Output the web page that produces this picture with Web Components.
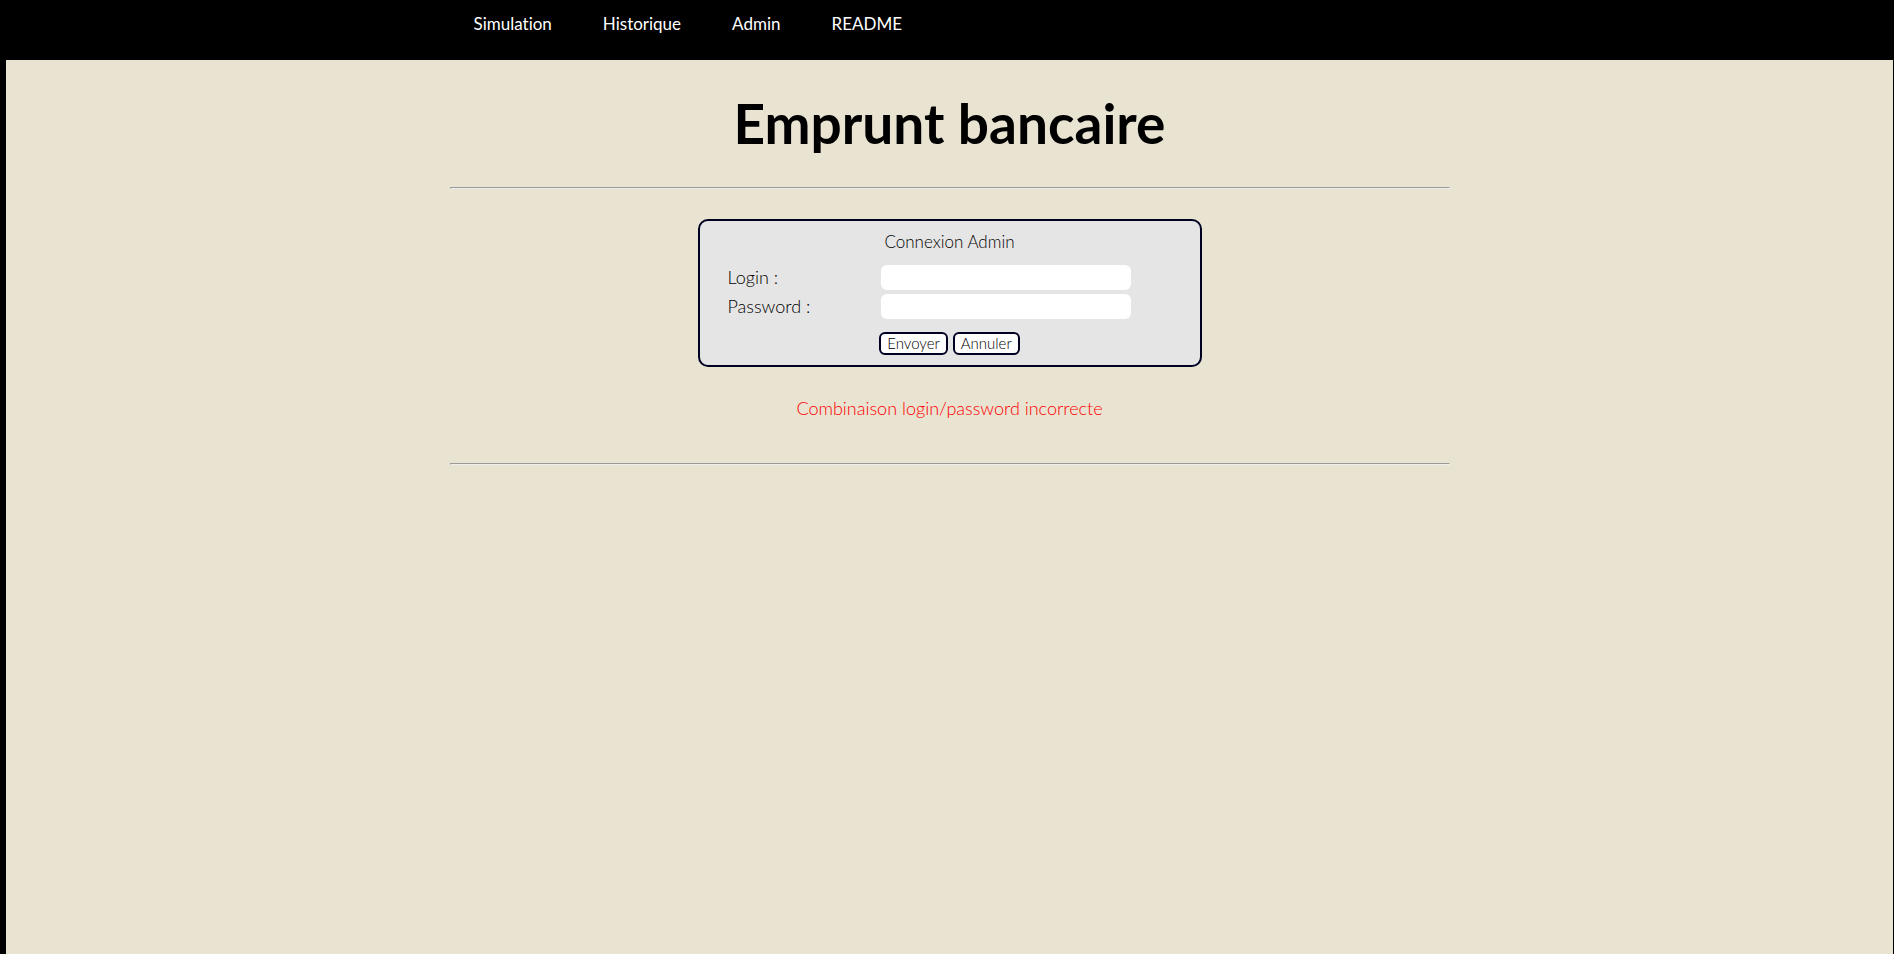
<!DOCTYPE html>
<html lang="fr">
<head>
<meta charset="utf-8">
<title>Emprunt bancaire</title>
<style>
html { background: #000; }
body { margin: 0; min-height: 100vh; background: #000; color: #000; font-family: Lato, "Open Sans", sans-serif; font-size: 17px; line-height: 24px; font-variant-ligatures: none; }
</style>
</head>
<body>
<loan-page>
  <site-nav slot="nav"></site-nav>
  <page-title>Emprunt bancaire</page-title>
  <page-rule></page-rule>
  <login-panel></login-panel>
  <error-message>Combinaison login/password incorrecte</error-message>
  <page-rule></page-rule>
</loan-page>
<script>
function define(name, markup) {
  const template = document.createElement('template');
  template.innerHTML = markup;
  customElements.define(name, class extends HTMLElement {
    constructor() {
      super();
      this.attachShadow({ mode: 'open' }).append(template.content.cloneNode(true));
    }
  });
}

define('loan-page', `
<style>
:host { display: flex; flex-direction: column; min-height: 100vh; box-sizing: border-box; padding: 0 1px 0 6px; }
main { flex: 1; background: #e9e3d2; }
.content { max-width: 1000px; margin: 0 auto; }
</style>
<slot name="nav"></slot>
<main><div class="content"><slot></slot></div></main>`);

define('site-nav', `
<style>
:host { display: block; background: #000; }
nav { max-width: 1000px; min-height: 60px; margin: 0 auto; padding: 12px 24px 0; box-sizing: border-box; }
ul { list-style: none; display: flex; gap: 51px; margin: 0; padding: 0; }
a { color: #fff; text-decoration: none; }
</style>
<nav><ul>
<li><a href="#simulation">Simulation</a></li>
<li><a href="#historique">Historique</a></li>
<li><a href="#admin">Admin</a></li>
<li><a href="#readme">README</a></li>
</ul></nav>`);

define('page-title', `
<style>
:host { display: block; padding: 31px 0 32px; text-align: center; }
h1 { margin: 0; font-size: 55px; line-height: 64px; font-weight: 700; }
</style>
<h1><slot></slot></h1>`);

define('page-rule', `
<style>
:host { display: block; }
hr { margin: 0; border: 1px solid; border-color: #9a9a9a #eee #eee #9a9a9a; }
</style>
<hr>`);

define('login-panel', `
<style>
:host { display: block; padding: 30px 0 29px; font-weight: 300; }
form { width: 504px; max-width: 100%; box-sizing: border-box; margin: 0 auto; padding: 9px 28px 10px; border: 2px solid #000022; border-radius: 10px; background: #e5e5e5; }
h2 { margin: 0 0 11px; font: inherit; text-align: center; }
.fields { display: grid; grid-template-columns: 153px 250px; row-gap: 4px; align-items: center; }
label { font-size: 18px; line-height: 25px; }
input { width: 100%; height: 25px; box-sizing: border-box; border: 0; border-radius: 6px; padding: 0 6px; background: #fff; font: inherit; }
.actions { display: flex; justify-content: center; gap: 5px; margin-top: 13px; }
button { height: 23px; padding: 0 6px; border: 2px solid #000022; border-radius: 6px; background: #fff; color: #000; font-family: inherit; font-size: 15px; line-height: 19px; font-weight: inherit; }
</style>
<form>
<h2>Connexion Admin</h2>
<div class="fields">
<label for="login">Login :</label><input id="login" type="text">
<label for="password">Password :</label><input id="password" type="password">
</div>
<div class="actions"><button type="button">Envoyer</button><button type="reset">Annuler</button></div>
</form>`);

define('error-message', `
<style>
:host { display: block; padding-bottom: 43px; color: #f00; text-align: center; font-size: 18px; font-weight: 300; }
p { margin: 0; }
</style>
<p><slot></slot></p>`);
</script>
</body>
</html>
